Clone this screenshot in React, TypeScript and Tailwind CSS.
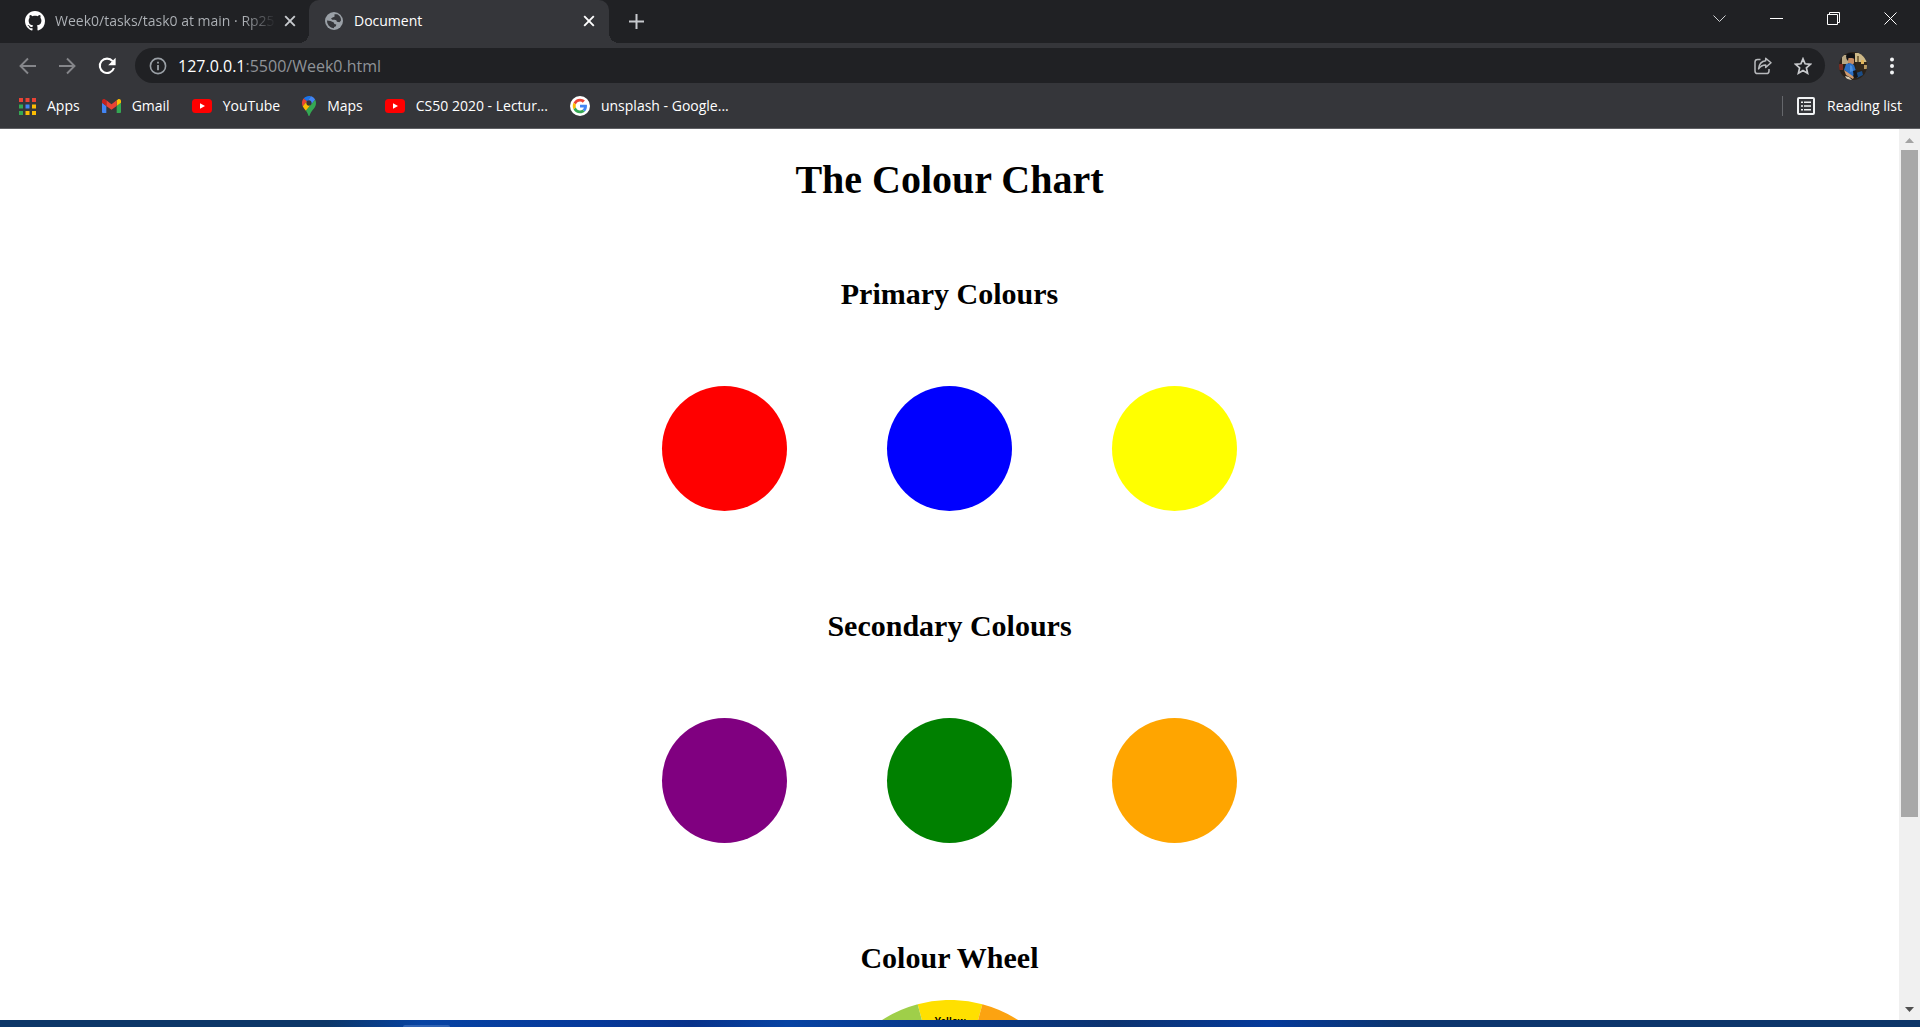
import type { ReactNode } from 'react';

function GithubIcon() {
  return (
    <svg viewBox="0 0 16 16" className="size-5 shrink-0" aria-hidden="true">
      <path
        fill="#fff"
        d="M8 0C3.58 0 0 3.58 0 8c0 3.54 2.29 6.53 5.47 7.59.4.07.55-.17.55-.38 0-.19-.01-.82-.01-1.49-2.01.37-2.53-.49-2.69-.94-.09-.23-.48-.94-.82-1.13-.28-.15-.68-.52-.01-.53.63-.01 1.08.58 1.23.82.72 1.21 1.87.87 2.33.66.07-.52.28-.87.51-1.07-1.78-.2-3.64-.89-3.64-3.95 0-.87.31-1.59.82-2.15-.08-.2-.36-1.02.08-2.12 0 0 .67-.21 2.2.82.64-.18 1.32-.27 2-.27s1.36.09 2 .27c1.53-1.04 2.2-.82 2.2-.82.44 1.1.16 1.92.08 2.12.51.56.82 1.27.82 2.15 0 3.07-1.87 3.75-3.65 3.95.29.25.54.73.54 1.48 0 1.07-.01 1.93-.01 2.2 0 .21.15.46.55.38A8.01 8.01 0 0 0 16 8c0-4.42-3.58-8-8-8z"
      />
    </svg>
  );
}

function GlobeIcon() {
  return (
    <svg viewBox="0 0 18 18" className="size-[18px] shrink-0" aria-hidden="true">
      <circle cx="9" cy="9" r="9" fill="#9aa0a6" />
      <path fill="#35363a" d="M9.500 2.200h2.800a7 7 0 0 1 3.700 6.400l-1.500 1.600-2.600-.4-.6-1.600-1.800-.4H7.200L6 6.600l1.600-1.200 1.900-.6z" />
      <path fill="#35363a" d="M2 8.600l3.600.3 3.200 1.600.6 1.500 1.900.4-.4 1.800-1.700.7-.4 1.300A7 7 0 0 1 2 8.600z" />
    </svg>
  );
}

function CrossIcon() {
  return (
    <svg viewBox="0 0 12 12" className="size-3" fill="none" stroke="currentColor" strokeWidth="1.900" aria-hidden="true">
      <path d="M1.200 1.200l9.600 9.600M10.800 1.200l-9.600 9.600" />
    </svg>
  );
}

function ArrowIcon({ back = false }: { back?: boolean }) {
  return (
    <svg viewBox="0 0 18 18" className="size-[18px]" fill="none" stroke="#85868a" strokeWidth="1.900" aria-hidden="true">
      {back ? <path d="M18 9H2.500M10 1.500L2.500 9l7.500 7.500" /> : <path d="M1 9h15.500M9 1.500L16.500 9 9 16.500" />}
    </svg>
  );
}

function ReloadIcon() {
  return (
    <svg viewBox="0 0 18 18" className="size-[18px]" aria-hidden="true">
      <path fill="none" stroke="#fff" strokeWidth="2.100" d="M14.600 4.200A7.200 7.200 0 1 0 15.900 11" />
      <path fill="#fff" d="M17.600.800v7.400h-7.400z" />
    </svg>
  );
}

function InfoIcon() {
  return (
    <svg viewBox="0 0 18 18" className="size-[18px] shrink-0" aria-hidden="true">
      <circle cx="9" cy="9" r="7.600" fill="none" stroke="#9aa0a6" strokeWidth="1.600" />
      <path fill="#9aa0a6" d="M8.100 4.700h1.800v1.800H8.100zM8.100 8h1.800v5.300H8.100z" />
    </svg>
  );
}

function ShareIcon() {
  return (
    <svg viewBox="0 0 18 18" className="size-[18px]" fill="none" stroke="#b8babd" strokeWidth="1.500" strokeLinejoin="round" aria-hidden="true">
      <path d="M6.500 2.500H3.600A2.600 2.600 0 0 0 1 5.100v8.800a2.600 2.600 0 0 0 2.600 2.600h8.800a2.600 2.600 0 0 0 2.600-2.600V12" />
      <path d="M11.700 1.200l5.300 4.600-5.300 4.600V8C8.500 8 6.500 9 4.600 11.900 5 7.800 7.500 4.200 11.700 3.800z" />
    </svg>
  );
}

function StarIcon() {
  return (
    <svg viewBox="0 0 18 18" className="size-[18px]" fill="none" stroke="#c8cacd" strokeWidth="1.700" aria-hidden="true">
      <path d="M9 1.800l2.100 5 5.400.5-4.100 3.600 1.200 5.300L9 13.400l-4.600 2.800 1.200-5.300L1.500 7.300l5.400-.5z" />
    </svg>
  );
}

function Avatar() {
  return (
    <svg viewBox="0 0 28 28" className="size-7 overflow-hidden rounded-full" aria-hidden="true">
      <rect width="28" height="28" fill="#2b2219" />
      <rect x="3" y="3" width="6" height="9" fill="#b9a884" />
      <rect x="16" y="1" width="12" height="9" fill="#cdb988" />
      <rect x="18" y="4" width="2" height="7" fill="#7d6a43" />
      <rect x="17" y="10" width="11" height="8" fill="#33281b" />
      <rect x="22" y="8" width="3" height="4" fill="#e0b55c" />
      <rect x="25" y="13" width="3" height="4" fill="#b89a63" />
      <rect x="0" y="12" width="4" height="6" fill="#7c2d22" />
      <path fill="#c58c62" d="M9 5h6v6l-2 3-4-3z" />
      <path fill="#101114" d="M7 4c1-4 8-4 9 0v3l-3-1H9.500L9 9 7.500 7z" />
      <path fill="#2c6fc4" d="M7 12l4-1 4 2 2 6-3 5H9l-2-5-2-1z" />
      <path fill="#4d90dd" d="M11 13l2 1 1 5-3 1z" />
      <path fill="#cf9a6e" d="M5 18l3 2 7 5-1 2-7-4z" />
      <path fill="#1a4c85" d="M17 21l6-2 1 4-6 3z" />
      <path fill="#15161a" d="M14 19l3-1 2 7-4 1z" />
      <path fill="#d8cbb5" d="M6 24l4 1 3 3H8z" />
    </svg>
  );
}

function AppsIcon() {
  const colors = ['#ea4335', '#ea4335', '#ea4335', '#34a853', '#4285f4', '#fbbc04', '#34a853', '#fbbc04', '#fbbc04'];
  return (
    <svg viewBox="0 0 17 17" className="size-[17px] shrink-0" aria-hidden="true">
      {colors.map((c, i) => (
        <rect key={i} x={(i % 3) * 6.5} y={Math.floor(i / 3) * 6.5} width="4" height="4" fill={c} />
      ))}
    </svg>
  );
}

function GmailIcon() {
  return (
    <svg viewBox="52 42 88 66" className="w-[19px] shrink-0" aria-hidden="true">
      <path fill="#4285f4" d="M58 108h14V74L52 59v43c0 3.320 2.690 6 6 6" />
      <path fill="#34a853" d="M120 108h14c3.320 0 6-2.690 6-6V59l-20 15" />
      <path fill="#fbbc04" d="M120 48v26l20-15v-8c0-7.420-8.470-11.650-14.400-7.200" />
      <path fill="#ea4335" d="M72 74V48l24 18 24-18v26L96 92" />
      <path fill="#c5221f" d="M52 51v8l20 15V48l-5.600-4.200c-5.940-4.450-14.400-.22-14.400 7.200" />
    </svg>
  );
}

function YoutubeIcon() {
  return (
    <svg viewBox="0 0 20 14" className="w-5 shrink-0" aria-hidden="true">
      <rect width="20" height="14" rx="3.500" fill="#f00" />
      <path fill="#fff" d="M8 4.200v5.600L13 7z" />
    </svg>
  );
}

function MapsIcon() {
  return (
    <svg viewBox="0 0 92.300 132.300" className="h-5 shrink-0" aria-hidden="true">
      <path fill="#1a73e8" d="M60.200 2.200C55.800.8 51 0 46.100 0 32 0 19.300 6.400 10.800 16.500l21.800 18.300L60.200 2.200z" />
      <path fill="#ea4335" d="M10.800 16.500C4.100 24.500 0 34.900 0 46.100c0 8.700 1.700 15.700 4.600 22l28-33.300-21.800-18.300z" />
      <path fill="#4285f4" d="M46.200 28.500c9.800 0 17.700 7.900 17.700 17.700 0 4.300-1.600 8.300-4.200 11.400 0 0 13.900-16.600 27.500-32.700-5.600-10.800-15.300-19-27-22.700L32.600 34.800c3.300-3.800 8.100-6.300 13.600-6.300" />
      <path fill="#fbbc04" d="M46.200 63.800c-9.800 0-17.700-7.900-17.700-17.700 0-4.300 1.500-8.300 4.100-11.300l-28 33.300c4.800 10.600 12.800 19.200 21 29.900l34.100-40.500c-3.300 3.900-8.100 6.300-13.500 6.300" />
      <path fill="#34a853" d="M59.100 109.200c15.400-24.100 33.300-35 33.300-63 0-7.700-1.900-14.900-5.200-21.300L25.600 98c2.600 3.400 5.300 7.300 7.900 11.300 9.400 14.500 6.800 23.100 12.800 23.100s3.400-8.700 12.800-23.200" />
    </svg>
  );
}

function GoogleIcon() {
  return (
    <svg viewBox="-9 -9 66 66" className="size-5 shrink-0" aria-hidden="true">
      <circle cx="24" cy="24" r="33" fill="#fff" />
      <path fill="#EA4335" d="M24 9.500c3.540 0 6.710 1.220 9.210 3.600l6.850-6.850C35.900 2.380 30.470 0 24 0 14.620 0 6.510 5.380 2.560 13.220l7.980 6.190C12.430 13.720 17.740 9.500 24 9.500z" />
      <path fill="#4285F4" d="M46.980 24.550c0-1.570-.15-3.090-.38-4.550H24v9.020h12.940c-.58 2.960-2.260 5.480-4.780 7.180l7.730 6c4.510-4.180 7.090-10.360 7.090-17.650z" />
      <path fill="#FBBC05" d="M10.530 28.590c-.48-1.450-.76-2.990-.76-4.590s.27-3.140.76-4.590l-7.980-6.190C.92 16.460 0 20.120 0 24c0 3.880.92 7.540 2.560 10.780l7.970-6.190z" />
      <path fill="#34A853" d="M24 48c6.480 0 11.930-2.130 15.890-5.810l-7.730-6c-2.150 1.450-4.920 2.300-8.160 2.300-6.260 0-11.570-4.220-13.470-9.910l-7.980 6.190C6.510 42.620 14.620 48 24 48z" />
    </svg>
  );
}

function ReadingListIcon() {
  return (
    <svg viewBox="0 0 18 18" className="size-[18px] shrink-0" aria-hidden="true">
      <rect x="1" y="1" width="16" height="16" rx="1" fill="none" stroke="#f1f3f4" strokeWidth="2" />
      <path fill="#f1f3f4" d="M4 4.500h2v1.600H4zM7 4.500h7v1.600H7zM4 8.200h2v1.600H4zM7 8.200h7v1.600H7zM4 11.900h2v1.600H4zM7 11.900h7v1.600H7z" />
    </svg>
  );
}

function WindowButton({ label, children }: { label: string; children: ReactNode }) {
  return (
    <button type="button" aria-label={label} className="flex h-9 w-[57px] items-center justify-center text-white">
      <svg viewBox="0 0 13 13" className="size-[13px]" fill="none" stroke="currentColor" aria-hidden="true">
        {children}
      </svg>
    </button>
  );
}

function TabBar() {
  return (
    <header className="flex h-[43px] bg-[#202124]">
      <div className="flex w-[309px] items-center pr-[13px] pb-0.5 pl-[25px]">
        <GithubIcon />
        <span className="ml-2.5 flex-1 overflow-hidden bg-linear-to-r from-[#b0b4b9] from-85% to-transparent bg-clip-text text-sm whitespace-nowrap text-transparent">
          Week0/tasks/task0 at main · Rp25
        </span>
        <button type="button" aria-label="Close tab" className="ml-2 text-[#c7cace]">
          <CrossIcon />
        </button>
      </div>
      <div className="relative flex w-[300px] items-center rounded-t-[10px] bg-[#35363a] pr-[14px] pb-0.5 pl-4">
        <span className="absolute bottom-0 -left-2.5 size-2.5 bg-[radial-gradient(circle_at_top_left,transparent_10px,#35363a_10px)]" />
        <span className="absolute -right-2.5 bottom-0 size-2.5 bg-[radial-gradient(circle_at_top_right,transparent_10px,#35363a_10px)]" />
        <GlobeIcon />
        <span className="ml-[11px] flex-1 text-sm text-white">Document</span>
        <button type="button" aria-label="Close tab" className="text-white">
          <CrossIcon />
        </button>
      </div>
      <button type="button" aria-label="New tab" className="ml-5 self-center text-[#c7cace]">
        <svg viewBox="0 0 15 15" className="size-[15px]" stroke="currentColor" strokeWidth="2" aria-hidden="true">
          <path d="M7.500 0v15M0 7.500h15" />
        </svg>
      </button>
      <div className="mr-px ml-auto flex">
        <WindowButton label="Search tabs">
          <path stroke="#d0d2d4" d="M.500 3.500l6 6 6-6" />
        </WindowButton>
        <WindowButton label="Minimize">
          <path d="M0 6.500h13" />
        </WindowButton>
        <WindowButton label="Restore">
          <path d="M.500 2.500h10v10H.500zM2.500 2.500v-2h10v10h-2" />
        </WindowButton>
        <WindowButton label="Close">
          <path d="M.500.500l12 12M12.500.500l-12 12" />
        </WindowButton>
      </div>
    </header>
  );
}

function Toolbar() {
  return (
    <div className="flex h-[45px] items-center bg-[#35363a] pr-[26px] pl-[18px]">
      <div className="flex w-[117px] gap-[22px]">
        <button type="button" aria-label="Back"><ArrowIcon back /></button>
        <button type="button" aria-label="Forward"><ArrowIcon /></button>
        <button type="button" aria-label="Reload"><ReloadIcon /></button>
      </div>
      <div className="flex h-[35px] flex-1 items-center rounded-full bg-[#202124] pr-[13px] pl-3.5">
        <InfoIcon />
        <a href="#top" className="ml-[11px] flex-1 text-base text-[#8f9398]">
          <span className="text-white">127.0.0.1</span>:5500/Week0.html
        </a>
        <button type="button" aria-label="Share"><ShareIcon /></button>
        <button type="button" aria-label="Bookmark this page" className="ml-[22px]"><StarIcon /></button>
      </div>
      <button type="button" aria-label="Profile" className="ml-3.5"><Avatar /></button>
      <button type="button" aria-label="Menu" className="ml-[23px]">
        <svg viewBox="0 0 4 18" className="h-[18px] w-1" fill="#f1f3f4" aria-hidden="true">
          <circle cx="2" cy="2.500" r="2" />
          <circle cx="2" cy="9" r="2" />
          <circle cx="2" cy="15.500" r="2" />
        </svg>
      </button>
    </div>
  );
}

const bookmarks = [
  { label: 'Apps', icon: <AppsIcon /> },
  { label: 'Gmail', icon: <GmailIcon /> },
  { label: 'YouTube', icon: <YoutubeIcon /> },
  { label: 'Maps', icon: <MapsIcon /> },
  { label: 'CS50 2020 - Lectur...', icon: <YoutubeIcon /> },
  { label: 'unsplash - Google...', icon: <GoogleIcon /> },
];

function BookmarksBar() {
  return (
    <nav className="flex h-[41px] items-center border-b border-[#5f6064] bg-[#35363a] pr-[18px] pb-1 pl-[19px] text-sm text-white">
      <div className="flex flex-1 gap-[22px]">
        {bookmarks.map((b) => (
          <a key={b.label} href="#top" className="flex items-center gap-[11px] whitespace-nowrap">
            {b.icon}
            {b.label}
          </a>
        ))}
      </div>
      <div className="h-5 w-px bg-[#65676b]" />
      <button type="button" className="ml-3.5 flex items-center gap-3">
        <ReadingListIcon />
        Reading list
      </button>
    </nav>
  );
}

function Swatches({ title, colors }: { title: string; colors: { name: string; fill: string }[] }) {
  return (
    <section className="flex flex-col items-center">
      <h2 className="text-[30px] leading-[34px] font-bold">{title}</h2>
      <ul className="mt-[75px] mb-[98px] flex gap-[100px]">
        {colors.map((c) => (
          <li key={c.name} aria-label={c.name} className={`size-[125px] rounded-full ${c.fill}`} />
        ))}
      </ul>
    </section>
  );
}

const segmentFills = [
  '#ffe000',
  '#fca311',
  '#f58220',
  '#f15a24',
  '#ed1c24',
  '#b01f7a',
  '#6b2c91',
  '#3f3a97',
  '#0b5fae',
  '#0098a6',
  '#1fa04b',
  '#9fcf49',
];

function ColourWheel() {
  const at = (deg: number) => {
    const a = (deg * Math.PI) / 180;
    return `${125 + 125 * Math.sin(a)} ${125 - 125 * Math.cos(a)}`;
  };
  return (
    <svg viewBox="0 0 250 250" className="mt-[25px] size-[250px] shrink-0" role="img" aria-label="Colour wheel">
      {segmentFills.map((fill, i) => (
        <path key={fill} fill={fill} d={`M125 125L${at(i * 30 - 15)}A125 125 0 0 1 ${at(i * 30 + 15)}Z`} />
      ))}
      <text x="125" y="25" textAnchor="middle" className="font-['Liberation_Sans',sans-serif] text-[10px] font-bold">
        Yellow
      </text>
    </svg>
  );
}

function ScrollBar() {
  return (
    <div className="flex w-[21px] shrink-0 flex-col items-center bg-[#f0f0f0]" aria-hidden="true">
      <svg viewBox="0 0 21 21" className="size-[21px]">
        <path fill="#a3a3a3" d="M6 14l4.500-5 4.500 5z" />
      </svg>
      <div className="flex w-[17px] flex-1 flex-col">
        <div className="flex-[667] bg-[#a8a8a8]" />
        <div className="flex-[182]" />
      </div>
      <svg viewBox="0 0 21 21" className="size-[21px]">
        <path fill="#505050" d="M6 8l4.500 5L15 8z" />
      </svg>
    </div>
  );
}

export default function App() {
  return (
    <div id="top" className="flex h-screen flex-col overflow-hidden bg-white font-['Open_Sans','Noto_Sans',sans-serif]">
      <TabBar />
      <Toolbar />
      <BookmarksBar />
      <div className="flex min-h-0 flex-1">
        <main className="flex flex-1 flex-col items-center overflow-hidden pt-7 font-['Liberation_Serif',serif] text-black">
          <h1 className="mb-[74px] text-[40px] leading-[46px] font-bold">The Colour Chart</h1>
          <Swatches
            title="Primary Colours"
            colors={[
              { name: 'Red', fill: 'bg-[#ff0000]' },
              { name: 'Blue', fill: 'bg-[#0000ff]' },
              { name: 'Yellow', fill: 'bg-[#ffff00]' },
            ]}
          />
          <Swatches
            title="Secondary Colours"
            colors={[
              { name: 'Purple', fill: 'bg-[#800080]' },
              { name: 'Green', fill: 'bg-[#008000]' },
              { name: 'Orange', fill: 'bg-[#ffa500]' },
            ]}
          />
          <section className="flex flex-col items-center">
            <h2 className="text-[30px] leading-[34px] font-bold">Colour Wheel</h2>
            <ColourWheel />
          </section>
        </main>
        <ScrollBar />
      </div>
      <footer className="flex h-[7px] shrink-0 items-end bg-[linear-gradient(to_right,#0c3768_0%,#0c3768_17%,#0743a3_22%,#06399a_31%,#08328a_36%,#0743a3_41%,#08398c_48%,#0c3370_58%,#053a9b_66%,#0c356e_73%,#0c3568_100%)]">
        <div className="ml-[21%] h-0.5 w-[47px] rounded-t-sm bg-[#2f62b3]" />
      </footer>
    </div>
  );
}
